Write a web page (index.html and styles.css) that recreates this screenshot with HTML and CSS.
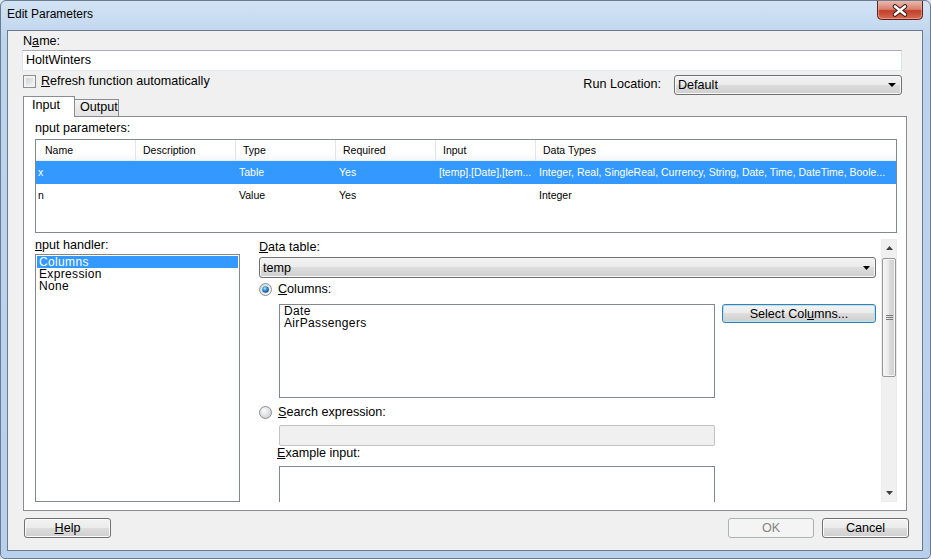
FILE: index.html
```html
<!DOCTYPE html>
<html>
<head>
<meta charset="utf-8">
<title>Edit Parameters</title>
<link rel="stylesheet" href="styles.css">
</head>
<body>
<div class="window">
  <div class="titlebar">
    <span class="title">Edit Parameters</span>
    <svg class="close" width="46" height="19" viewBox="0 0 46 19">
      <defs>
        <linearGradient id="cg" x1="0" y1="0" x2="0" y2="1">
          <stop offset="0" stop-color="#edb8ad"/>
          <stop offset="0.45" stop-color="#d68070"/>
          <stop offset="0.52" stop-color="#c23f29"/>
          <stop offset="1" stop-color="#d86d55"/>
        </linearGradient>
      </defs>
      <path d="M0.5,0 V14.5 Q0.5,18.5 4.5,18.5 H41.5 Q45.5,18.5 45.5,14.5 V0" fill="url(#cg)" stroke="#5a2218"/>
      <path d="M1.5,0 V14 Q1.5,17.5 5,17.5 H41 Q44.5,17.5 44.5,14 V0" fill="none" stroke="#f2b3a5" stroke-opacity="0.6"/>
      <path d="M18,5.5 L28,13.5 M28,5.5 L18,13.5" stroke="#3b1812" stroke-width="4.6" stroke-linecap="round"/>
      <path d="M18,5.5 L28,13.5 M28,5.5 L18,13.5" stroke="#ffffff" stroke-width="2.6" stroke-linecap="round"/>
    </svg>
  </div>

  <div class="client">
    <div class="lbl name-lbl">N<u>a</u>me:</div>
    <div class="textbox name-input">HoltWinters</div>

    <div class="row2">
      <span class="checkbox"></span>
      <span class="lbl chk-lbl"><u>R</u>efresh function automatically</span>
      <span class="lbl runloc">Run Location:</span>
      <div class="combo run-combo">
        <span>Default</span>
        <svg width="8" height="4" viewBox="0 0 8 4"><polygon points="0,0 8,0 4,4" fill="#000"/></svg>
      </div>
    </div>

    <div class="tabs">
      <div class="tab active">Input</div>
      <div class="tab">Output</div>
    </div>

    <div class="panel">
      <div class="lbl params-lbl">nput parameters:</div>
      <div class="grid">
        <div class="grow head">
          <span class="c first">Name</span>
          <span class="c">Description</span>
          <span class="c">Type</span>
          <span class="c">Required</span>
          <span class="c">Input</span>
          <span class="c">Data Types</span>
        </div>
        <div class="grow sel">
          <span class="c first">x</span>
          <span class="c"></span>
          <span class="c">Table</span>
          <span class="c">Yes</span>
          <span class="c">[temp].[Date],[tem...</span>
          <span class="c">Integer, Real, SingleReal, Currency, String, Date, Time, DateTime, Boole...</span>
        </div>
        <div class="grow">
          <span class="c first">n</span>
          <span class="c"></span>
          <span class="c">Value</span>
          <span class="c">Yes</span>
          <span class="c"></span>
          <span class="c">Integer</span>
        </div>
      </div>

      <div class="lower">
        <div class="handler">
          <div class="lbl handler-lbl"><u>n</u>put handler:</div>
          <div class="listbox handler-list">
            <div class="item sel">Columns</div>
            <div class="item">Expression</div>
            <div class="item">None</div>
          </div>
        </div>

        <div class="detail">
          <div class="lbl dt-lbl"><u>D</u>ata table:</div>
          <div class="combo dt-combo">
            <span>temp</span>
            <svg width="7" height="4" viewBox="0 0 7 4"><polygon points="0,0 7,0 3.5,4" fill="#000"/></svg>
          </div>

          <div class="radio-row">
            <svg class="radio" width="13" height="13" viewBox="0 0 13 13">
              <defs>
                <linearGradient id="rr1" x1="0" y1="0" x2="1" y2="1">
                  <stop offset="0" stop-color="#cfd2d5"/>
                  <stop offset="1" stop-color="#fbfbfb"/>
                </linearGradient>
                <radialGradient id="rb1" cx="0.4" cy="0.35" r="0.7">
                  <stop offset="0" stop-color="#a8e8ff"/>
                  <stop offset="0.5" stop-color="#2c8cd6"/>
                  <stop offset="1" stop-color="#0b3c70"/>
                </radialGradient>
              </defs>
              <circle cx="6.5" cy="6.5" r="6" fill="url(#rr1)" stroke="#8d8e8f"/>
              <circle cx="6.5" cy="6.5" r="3.3" fill="url(#rb1)"/>
            </svg>
            <span class="lbl radio-lbl"><u>C</u>olumns:</span>
          </div>

          <div class="cols-row">
            <div class="listbox cols-list">
              <div class="item">Date</div>
              <div class="item">AirPassengers</div>
            </div>
            <div class="btn select-btn">Select Col<u>u</u>mns...</div>
          </div>

          <div class="radio-row search-row">
            <svg class="radio" width="13" height="13" viewBox="0 0 13 13">
              <defs>
                <radialGradient id="rr2" cx="0.4" cy="0.35" r="0.75">
                  <stop offset="0" stop-color="#fbfbfb"/>
                  <stop offset="1" stop-color="#c9cbcd"/>
                </radialGradient>
              </defs>
              <circle cx="6.5" cy="6.5" r="6" fill="url(#rr2)" stroke="#8d8e8f"/>
            </svg>
            <span class="lbl radio-lbl"><u>S</u>earch expression:</span>
          </div>

          <div class="disabled-box"></div>
          <div class="lbl ex-lbl"><u>E</u>xample input:</div>
          <div class="listbox ex-box"></div>
        </div>

        <div class="vscroll">
          <div class="sb-btn">
            <svg width="7" height="4" viewBox="0 0 7 4"><polygon points="0,4 7,4 3.5,0" fill="#404040"/></svg>
          </div>
          <div class="thumb">
            <svg width="7" height="5" viewBox="0 0 7 5"><path d="M0,0.5 H7 M0,2.5 H7 M0,4.5 H7" stroke="#7a7a7a"/></svg>
          </div>
          <div class="sb-spacer"></div>
          <div class="sb-btn">
            <svg width="7" height="4" viewBox="0 0 7 4"><polygon points="0,0 7,0 3.5,4" fill="#404040"/></svg>
          </div>
        </div>
      </div>
    </div>

    <div class="buttons">
      <div class="btn help"><u>H</u>elp</div>
      <div class="btn ok">OK</div>
      <div class="btn cancel">Cancel</div>
    </div>
  </div>
</div>
</body>
</html>
```

FILE: styles.css
```css
* {
  box-sizing: border-box;
}

body {
  margin: 0;
  width: 931px;
  height: 559px;
  overflow: hidden;
  background: #dfe8f2;
  font-family: "Liberation Sans", Arial, sans-serif;
  font-size: 12.6px;
  color: #000;
}

u {
  text-decoration: underline;
  text-underline-offset: 1px;
}

.window {
  width: 931px;
  height: 559px;
  border: 1px solid #6a7c92;
  border-radius: 6px 6px 5px 5px;
  background: linear-gradient(#d3e3f4, #bcd4ee 40px, #b8d0eb);
  display: flex;
  flex-direction: column;
  overflow: hidden;
}

.titlebar {
  height: 29px;
  flex: none;
  display: flex;
  justify-content: space-between;
  align-items: flex-start;
  padding: 0 7px 0 6px;
}

.title {
  font-size: 12px;
  line-height: 27px;
  color: #000;
}

.close {
  display: block;
}

.client {
  height: 521px;
  flex: none;
  margin: 0 7px 0 6px;
  border: 1px solid #6d7a8a;
  background: #f0f0f0;
  padding: 0 15px;
  display: flex;
  flex-direction: column;
}

.lbl {
  white-space: nowrap;
}

.name-lbl {
  margin-top: 2px;
  height: 16px;
  line-height: 16px;
}

.textbox {
  background: #fff;
  border: 1px solid;
  border-color: #abadb3 #dbdfe6 #e3e9ef #e2e3ea;
}

.name-input {
  margin: 1px 5px 0 -1px;
  height: 21px;
  padding-left: 3px;
  line-height: 19px;
  flex: none;
}

.row2 {
  margin: 4px 5px 0 0;
  height: 20px;
  flex: none;
  display: flex;
  align-items: flex-start;
}

.checkbox {
  width: 13px;
  height: 13px;
  flex: none;
  border: 1px solid #8e8f8f;
  background: linear-gradient(135deg, #c9ccd1, #f7f7f7);
  box-shadow: inset 0 0 0 2px #f3f3f3;
}

.chk-lbl {
  margin-left: 5px;
  line-height: 13px;
}

.runloc {
  margin-left: auto;
  margin-right: 13px;
  line-height: 18px;
}

.combo {
  display: flex;
  align-items: center;
  justify-content: space-between;
  border: 1px solid #707070;
  border-radius: 3px;
  background: linear-gradient(#f2f2f2, #ebebeb 50%, #dddddd 50%, #cfcfcf);
  box-shadow: inset 0 0 0 1px #f8f8f8;
  padding: 0 5px 0 3px;
}

.combo svg {
  display: block;
}

.run-combo {
  width: 228px;
  height: 20px;
}

.tabs {
  margin-top: 1px;
  height: 20px;
  flex: none;
  display: flex;
  align-items: flex-end;
}

.tab {
  height: 17px;
  width: 45px;
  margin-left: -1px;
  border: 1px solid #898c95;
  border-bottom: none;
  background: linear-gradient(#f2f2f2, #e3e3e3);
  padding-left: 5px;
  line-height: 15px;
}

.tab.active {
  position: relative;
  z-index: 1;
  margin-left: 0;
  margin-bottom: -1px;
  width: 52px;
  height: 21px;
  background: #fff;
  padding-left: 8px;
  line-height: 17px;
}

.panel {
  height: 395px;
  flex: none;
  border: 1px solid #898c95;
  background: #fff;
  padding: 4px 9px 0 11px;
}

.params-lbl {
  height: 14px;
  line-height: 14px;
}

.grid {
  margin-top: 4px;
  height: 94px;
  border: 1px solid #828790;
  display: grid;
  grid-template-columns: 99px 100px 100px 100px 100px 1fr;
  grid-template-rows: 21px 23px 23px;
  align-content: start;
  font-size: 10.5px;
  overflow: hidden;
}

.grow {
  display: contents;
}

.grow .c {
  white-space: nowrap;
  overflow: hidden;
  padding-left: 4px;
  line-height: 23px;
}

.grow .c.first {
  padding-left: 2px;
}

.grow.head .c {
  background: linear-gradient(#ffffff, #ffffff 60%, #f6f7f9);
  border-left: 1px solid #e3e4e6;
  border-bottom: 1px solid #eeeff1;
  padding-left: 7px;
  line-height: 20px;
}

.grow.head .c.first {
  border-left: none;
  padding-left: 9px;
}

.grow.sel .c {
  background: #3399ff;
  color: #fff;
}

.lower {
  margin-top: 6px;
  height: 263px;
  display: flex;
}

.handler {
  width: 205px;
  flex: none;
  display: flex;
  flex-direction: column;
}

.handler-lbl {
  height: 15px;
  line-height: 13px;
  flex: none;
}

.listbox {
  background: #fff;
  border: 1px solid #828790;
}

.handler-list {
  flex: 1;
  padding: 1px;
}

.item {
  font-size: 12px;
  letter-spacing: 0.35px;
  line-height: 12px;
  height: 12px;
  padding-left: 2px;
  white-space: nowrap;
}

.item.sel {
  background: #3399ff;
  color: #fff;
}

.detail {
  width: 641px;
  flex: none;
  overflow: hidden;
  padding: 1px 5px 0 19px;
  display: flex;
  flex-direction: column;
}

.detail > * {
  flex: none;
}

.dt-lbl {
  line-height: 15px;
  height: 15px;
}

.dt-combo {
  margin-top: 2px;
  height: 21px;
}

.radio-row {
  margin-top: 5px;
  height: 13px;
  display: flex;
  align-items: center;
}

.radio {
  display: block;
  flex: none;
}

.radio-lbl {
  margin-left: 6px;
  line-height: 13px;
}

.cols-row {
  margin: 8px 0 0 20px;
  display: flex;
  align-items: flex-start;
}

.cols-list {
  width: 436px;
  height: 94px;
  padding: 0 2px;
}

.btn {
  height: 20px;
  border: 1px solid #707070;
  border-radius: 3px;
  background: linear-gradient(#f2f2f2, #ebebeb 50%, #dddddd 50%, #cfcfcf);
  box-shadow: inset 0 0 0 1px #fbfbfb;
  display: flex;
  align-items: center;
  justify-content: center;
  white-space: nowrap;
}

.select-btn {
  margin-left: 7px;
  width: 154px;
  height: 19px;
  border-color: #3c7fb1;
  box-shadow: inset 0 0 0 1px #aee3f8;
}

.search-row {
  margin-top: 8px;
}

.disabled-box {
  margin: 6px 0 0 20px;
  width: 436px;
  height: 21px;
  background: #f0f0f0;
  border: 1px solid #c2c2c2;
  border-radius: 2px;
}

.ex-lbl {
  margin-left: 18px;
  height: 14px;
  line-height: 14px;
}

.ex-box {
  margin: 6px 0 0 20px;
  width: 436px;
  height: 60px;
}

.vscroll {
  width: 16px;
  flex: none;
  background: #f0f0f0;
  border: 1px solid #ececec;
  display: flex;
  flex-direction: column;
}

.sb-btn {
  height: 16px;
  flex: none;
  display: flex;
  align-items: center;
  justify-content: center;
}

.sb-btn svg,
.thumb svg {
  display: block;
}

.thumb {
  margin: 2px 0 0 0;
  height: 119px;
  flex: none;
  border: 1px solid #979797;
  border-radius: 2px;
  background: linear-gradient(90deg, #f7f7f7, #e9e9e9 45%, #dadada 55%, #d0d0d0);
  box-shadow: inset 0 0 0 1px #f4f4f4;
  display: flex;
  align-items: center;
  justify-content: center;
}

.sb-spacer {
  flex: 1;
}

.buttons {
  margin: 7px -2px 0 1px;
  height: 20px;
  flex: none;
  display: flex;
}

.help {
  width: 87px;
}

.ok {
  margin-left: auto;
  width: 86px;
  border-color: #adb2b5;
  background: #f4f4f4;
  box-shadow: none;
  color: #838383;
}

.cancel {
  margin-left: 8px;
  width: 87px;
}
```
